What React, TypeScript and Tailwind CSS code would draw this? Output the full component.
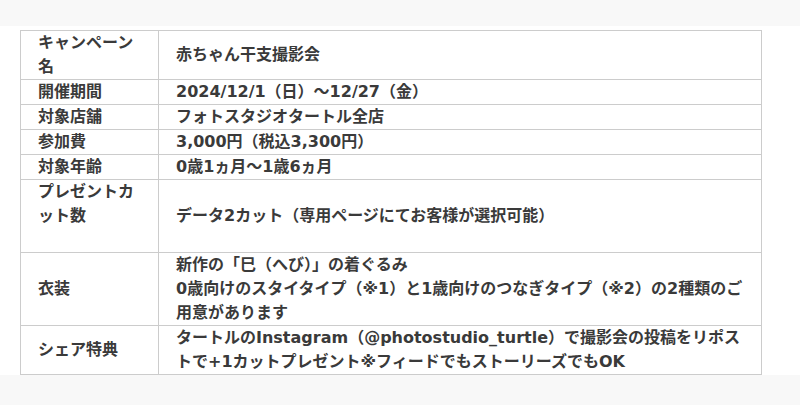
import React from "react";

const rows: { label: React.ReactNode; value: React.ReactNode }[] = [
  { label: "キャンペーン名", value: "赤ちゃん干支撮影会" },
  { label: "開催期間", value: "2024/12/1（日）～12/27（金）" },
  { label: "対象店舗", value: "フォトスタジオタートル全店" },
  { label: "参加費", value: "3,000円（税込3,300円）" },
  { label: "対象年齢", value: "0歳1ヵ月～1歳6ヵ月" },
  {
    label: (
      <>
        プレゼントカット数
        <br />
        <br />
      </>
    ),
    value: "データ2カット（専用ページにてお客様が選択可能）",
  },
  {
    label: "衣装",
    value: (
      <>
        新作の「巳（へび）」の着ぐるみ
        <br />
        0歳向けのスタイタイプ（※1）と1歳向けのつなぎタイプ（※2）の2種類のご用意があります
      </>
    ),
  },
  {
    label: "シェア特典",
    value:
      "タートルのInstagram（@photostudio_turtle）で撮影会の投稿をリポストで+1カットプレゼント※フィードでもストーリーズでもOK",
  },
];

export default function App() {
  return (
    <div
      className="min-h-[405px] bg-[#f8f8f8] pt-[26px]"
      style={{ fontFamily: '"DejaVu Sans", "Noto Sans CJK JP", sans-serif' }}
    >
      <div className="bg-white pt-[4px]">
        <table className="ml-[20px] w-[742px] border-collapse text-[16px] leading-[24px] font-bold text-[#3a3a3a]">
          <tbody>
            {rows.map((r, i) => (
              <tr key={i}>
                <td className="w-[138px] border border-[#cccccc] px-[17px] py-0 align-middle break-all">
                  {r.label}
                </td>
                <td className="border border-[#cccccc] pl-[17px] pr-[17px] py-0 align-middle">
                  {r.value}
                </td>
              </tr>
            ))}
          </tbody>
        </table>
      </div>
    </div>
  );
}
